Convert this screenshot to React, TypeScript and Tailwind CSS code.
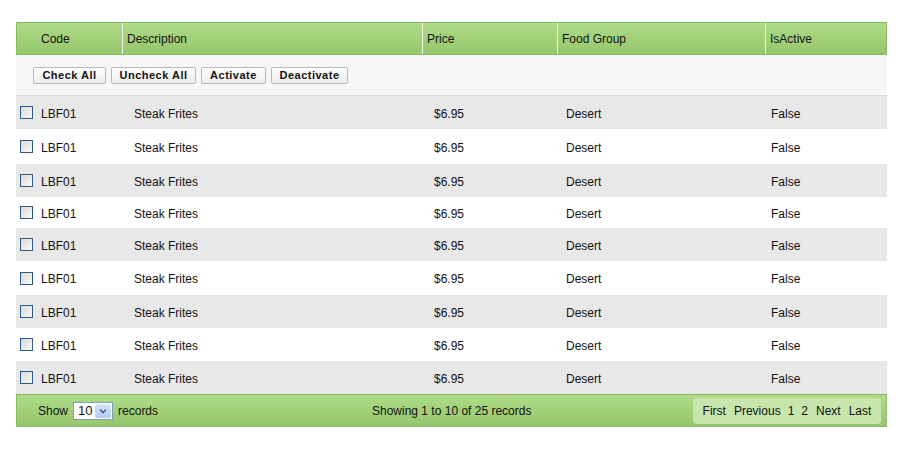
import React from "react";

const heights = [33, 35, 33, 31, 33, 34, 33, 33, 33];

function Checkbox() {
  return (
    <span className="inline-block w-[13px] h-[13px] border border-[#2d5a86] bg-gradient-to-br from-[#d8d8d8] to-[#fafafa] shrink-0" />
  );
}

function Btn({ label, w }: { label: string; w: string }) {
  return (
    <button
      className={`h-[17px] ${w} border border-[#b9b9b9] rounded-[2px] bg-gradient-to-b from-white to-[#ececec] text-[11px] font-bold tracking-[0.5px] text-[#111] leading-none flex items-center justify-center`}
    >
      {label}
    </button>
  );
}

export default function App() {
  return (
    <div
      className="w-[898px] h-[460px] bg-white pt-[22px] pl-[16px] text-[12px] text-[#111]"
      style={{ fontFamily: '"Liberation Sans", Arial, sans-serif' }}
    >
      <div className="w-[871px]">
        {/* header */}
        <div className="flex h-[33px] border border-[#88bb62] bg-gradient-to-b from-[#afdb86] to-[#96c66d] items-stretch">
          <div className="w-[105px] pl-[24px] flex items-center">Code</div>
          <div className="w-[300px] border-l border-[#f2f9ec] pl-[4px] flex items-center">Description</div>
          <div className="w-[135px] border-l border-[#f2f9ec] pl-[4px] flex items-center">Price</div>
          <div className="w-[208px] border-l border-[#f2f9ec] pl-[4px] flex items-center">Food Group</div>
          <div className="flex-1 border-l border-[#f2f9ec] pl-[4px] flex items-center">IsActive</div>
        </div>
        {/* toolbar */}
        <div className="h-[41px] bg-[#f6f6f6] border-b border-[#dddddd] flex items-center pl-[17px] gap-[5px] pt-[1px]">
          <Btn label="Check All" w="w-[73px]" />
          <Btn label="Uncheck All" w="w-[85px]" />
          <Btn label="Activate" w="w-[65px]" />
          <Btn label="Deactivate" w="w-[77px]" />
        </div>
        {/* rows */}
        {heights.map((h, i) => (
          <div
            key={i}
            className={`flex items-center ${i % 2 === 0 ? "bg-[#e8e8e8]" : "bg-white"}`}
            style={{ height: h }}
          >
            <div className="w-[118px] pl-[4px] flex items-center">
              <Checkbox />
              <span className="ml-[8px] mt-[2px]">LBF01</span>
            </div>
            <div className="w-[300px] mt-[2px]">Steak Frites</div>
            <div className="w-[132px] mt-[2px]">$6.95</div>
            <div className="w-[205px] mt-[2px]">Desert</div>
            <div className="flex-1 mt-[2px]">False</div>
          </div>
        ))}
        {/* footer */}
        <div className="h-[33px] border border-[#88bb62] bg-gradient-to-b from-[#afdb86] to-[#96c66d] flex items-center">
          <div className="flex items-center pl-[21px] w-[300px]">
            <span>Show</span>
            <div className="ml-[5px] w-[40px] h-[18px] bg-white border border-[#7f9db9] flex items-center">
              <span className="pl-[4px] text-[13px] w-[20px]">10</span>
              <span className="ml-auto mr-[1px] w-[16px] h-[14px] bg-gradient-to-b from-[#d6e4fa] to-[#b4cbf2] rounded-[2px] flex items-center justify-center">
                <svg width="8" height="6" viewBox="0 0 8 6">
                  <path d="M1 1.5 L4 4.5 L7 1.5" stroke="#4d6185" strokeWidth="1.6" fill="none" />
                </svg>
              </span>
            </div>
            <span className="ml-[5px]">records</span>
          </div>
          <div className="ml-[55px]">Showing 1 to 10 of 25 records</div>
          <div className="ml-auto mr-[5px] w-[188px] h-[26px] rounded-[4px] bg-[#c7e6ae] flex items-center justify-center text-[12px]">
            <span className="px-[4px]">First</span>
            <span className="px-[4px]">Previous</span>
            <span className="px-[3px]">1</span>
            <span className="px-[4px]">2</span>
            <span className="px-[4px]">Next</span>
            <span className="px-[4px]">Last</span>
          </div>
        </div>
      </div>
    </div>
  );
}
